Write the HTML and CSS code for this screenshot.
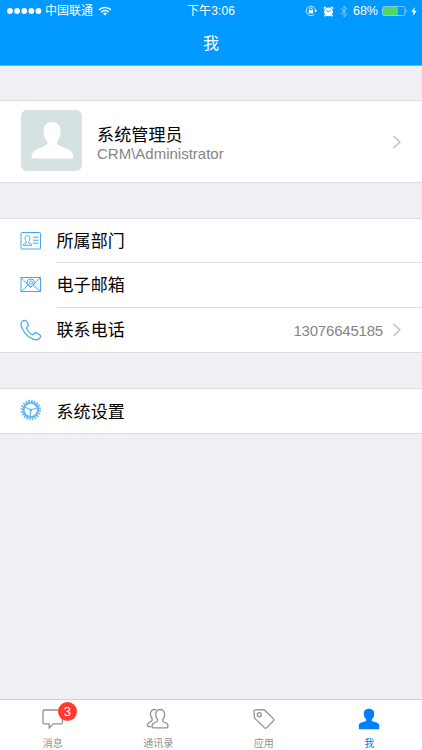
FILE: index.html
```html
<!DOCTYPE html>
<html lang="zh-CN">
<head>
<meta charset="utf-8">
<meta name="viewport" content="width=device-width, initial-scale=1">
<title>我</title>
<link rel="stylesheet" href="styles.css">
</head>
<body>
<div class="app">
  <header class="header">
    <div class="status">
      <div class="status-left">
        <svg class="dots" width="35" height="8" viewBox="0 0 35 8" fill="#fff"><circle cx="3" cy="4" r="2.9"/><circle cx="10.1" cy="4" r="2.9"/><circle cx="17.2" cy="4" r="2.9"/><circle cx="24.3" cy="4" r="2.9"/><circle cx="31.4" cy="4" r="2.9"/></svg>
        <span class="carrier">中国联通</span>
        <svg class="wifi" width="14" height="10" viewBox="0 0 14 10" fill="none" stroke="#fff" stroke-width="1.5"><path d="M1 3.9a8.5 8.5 0 0 1 12 0M3.2 6.1a5.4 5.4 0 0 1 7.6 0"/><path d="M7 9.6L4.9 7.5a3 3 0 0 1 4.2 0z" fill="#fff" stroke="none"/></svg>
      </div>
      <span class="time">下午3:06</span>
      <div class="status-right">
        <svg class="lock" width="12" height="12" viewBox="0 0 12 12" fill="none" stroke="#fff"><path d="M9.3 9.2A4.7 4.7 0 1 1 10.6 5.4" stroke-width=".8"/><path d="M9 5.2h3.2L10.6 7.3z" fill="#fff" stroke="none"/><path d="M4.6 5.5V4.3a1.3 1.3 0 0 1 2.6 0v1.2" stroke-width=".8"/><rect x="3.7" y="5.2" width="4.4" height="3.2" fill="#fff" stroke="none"/></svg>
        <svg class="alarm" width="11" height="11" viewBox="0 0 11 11"><circle cx="5.5" cy="5.8" r="4.4" fill="#fff"/><path d="M.8 2.6L2.8.8M10.2 2.6L8.2.8M2.5 9l-1 1.400M8.5 9l1 1.400" stroke="#fff" stroke-width="1.5"/><path d="M3.4 4.3l2.1 1.8 2-2.2" fill="none" stroke="#0099ff" stroke-width=".9"/></svg>
        <svg class="bluetooth" width="8" height="13" viewBox="0 0 8 13" fill="none" stroke="#7cc9ff" stroke-width="1"><path d="M.7 3.5l6.2 5.8L4 12V1l2.900 2.700L.7 9.5"/></svg>
        <span class="percent">68%</span>
        <svg class="battery" width="26" height="10" viewBox="0 0 26 10"><rect x=".5" y=".5" width="22.5" height="9" rx="1.5" fill="none" stroke="#7cc9ff"/><rect x="1" y="1" width="15" height="8" rx="1" fill="#4cd964"/><path d="M24 3.2q1.4 1.8 0 3.6z" fill="#b5e0ff"/></svg>
        <svg class="bolt" width="6" height="9" viewBox="0 0 6 9"><path d="M3.8 0L.2 5h2.200L1.8 9 5.8 3.700H3.400z" fill="#fff"/></svg>
      </div>
    </div>
    <h1 class="title">我</h1>
  </header>

  <main class="content">
    <section class="group profile">
      <svg class="avatar" width="61" height="61" viewBox="0 0 61 61"><rect width="61" height="61" rx="6" fill="#d6e1e1"/><path d="M31 12c-5.500 0-8.700 3.700-8.500 9.500.1 4.500 1.700 7.500 3.800 9.700v2.800c-1.500 1.900-6 3.400-9.800 5.100-4.300 1.900-6 4.800-6 9.400h42c0-4.600-1.700-7.500-6-9.400-3.800-1.700-8.900-3.200-10.400-5.100v-2.800c2.100-2.200 3.400-5.200 3.500-9.700.2-5.800-3.100-9.500-8.600-9.500z" fill="#fff"/></svg>
      <div class="who">
        <div class="name">系统管理员</div>
        <div class="account">CRM\Administrator</div>
      </div>
      <svg class="chevron" width="10" height="14" viewBox="0 0 10 14"><path d="M1.500 1l6.300 6-6.300 6"/></svg>
    </section>

    <section class="group list">
      <div class="row">
        <svg class="icon" width="22" height="22" viewBox="0 0 22 22"><rect x="1" y="2.500" width="19.500" height="16.500" rx="1"/><path d="M7.500 5.700c-1.800 0-2.500 1.200-2.400 2.900.1 1.600.6 2.300 1.200 3v1.100c-1.300.8-3.100.8-3.100 2.600h8.700c0-1.800-1.900-1.800-3.200-2.600v-1.100c.7-.7 1.100-1.400 1.200-3 .1-1.700-.6-2.900-2.400-2.900zM13 7.200h5.500M13 10.200h5.500M13 13.200h5.500"/></svg>
        <div class="cell"><span class="label">所属部门</span></div>
      </div>
      <div class="row">
        <svg class="icon" width="22" height="22" viewBox="0 0 22 22"><rect x="1" y="3.500" width="19.500" height="14"/><path d="M1 3.500l9.700 10L20.500 3.500M1 17.500l7.200-6.500M20.500 17.500l-7.200-6.500"/><path d="M10.800 12.900C7.700 10.800 7.100 9.500 7.100 8.200a3.700 3.200 0 0 1 7.400 0c0 1.300-.6 2.600-3.700 4.700zM12.300 9.200c-.8 1.300-3 1.200-3-.6 0-2 3-2.200 3-.4 0 1.500.6 1.700 1.300.9"/></svg>
        <div class="cell"><span class="label">电子邮箱</span></div>
      </div>
      <div class="row">
        <svg class="icon phone" width="22" height="22" viewBox="0 0 22 22"><path d="M2.500 2.200C.4 3.700.8 7 2.600 10.300c2.300 4.400 6.200 8.200 10.400 9.800 3.300 1.300 5.800.8 7.200-1.500.7-1.200.4-2.200-.8-3l-2.800-1.700c-1.100-.6-2-.3-2.600.7-.8 1.200-1.700 1.400-2.900.5-1.800-1.300-3.200-2.900-4.200-4.800-.6-1.200-.5-1.900.6-2.700 1-.7 1-1.500.5-2.600L6.600 2.500C5.700 1 4 1 2.500 2.200z"/></svg>
        <div class="cell"><span class="label">联系电话</span><span class="value">13076645185</span></div>
        <svg class="chevron" width="10" height="14" viewBox="0 0 10 14"><path d="M1.500 1l6.300 6-6.300 6"/></svg>
      </div>
    </section>

    <section class="group list">
      <div class="row">
        <svg class="icon gear" width="22" height="22" viewBox="0 0 22 22"><circle cx="10.800" cy="11" r="9.300" stroke-width="1.800" stroke-dasharray="1.650 1.272"/><circle cx="10.800" cy="11" r="7.300" stroke-width="2.300"/><circle cx="10.800" cy="11" r="1.500" fill="#62b8f5" stroke="none"/><path d="M10.800 11L5 8M10.800 11l6-2M10.800 11l-.7 6.300" stroke-width="1.300"/></svg>
        <div class="cell"><span class="label">系统设置</span></div>
      </div>
    </section>
  </main>

  <nav class="tabs">
    <div class="tab">
      <div class="tab-icon">
        <svg width="24" height="24" viewBox="0 0 24 24"><path d="M3.200 3h17.100q1.200 0 1.200 1.200v11.400q0 1.200-1.200 1.200h-7.800L8.200 21v-4.200h-5Q2 16.800 2 15.600V4.200Q2 3 3.200 3z"/></svg>
        <span class="badge">3</span>
      </div>
      <span class="tab-label">消息</span>
    </div>
    <div class="tab">
      <div class="tab-icon">
        <svg width="24" height="24" viewBox="0 0 24 24"><path d="M14.200 2.500c-3.200 0-4.700 2.400-4.500 5.300.1 2.500.9 3.700 1.900 4.700v1.600c0 1.200-5.400 1.300-5.400 4.100v1.400q0 1.200 1.200 1.200h13.300q1.200 0 1.200-1.200v-1.400c0-2.800-5.200-2.900-5.200-4.100v-1.600c1-1 1.900-2.200 2-4.700.2-2.900-1.400-5.300-4.500-5.300z"/><path d="M10.200 2.800C6.600 1.700 4.200 4 4.400 7.300c.1 2.400.9 3.500 1.800 4.500v1.500C6.200 14.500 1.500 15 1.500 17.800v.8q0 1 1 1h3.200"/></svg>
      </div>
      <span class="tab-label">通讯录</span>
    </div>
    <div class="tab">
      <div class="tab-icon">
        <svg width="24" height="24" viewBox="0 0 24 24"><path d="M3 2.800l8.400-.2q.8 0 1.400.6l8.700 8.700q.9.900 0 1.800l-7 7.200q-.9.900-1.800 0L3.100 11.600q-.6-.6-.6-1.400L2 3.800q0-1 1-1z"/><circle cx="7.300" cy="7.700" r="2"/></svg>
      </div>
      <span class="tab-label">应用</span>
    </div>
    <div class="tab active">
      <div class="tab-icon">
        <svg width="24" height="24" viewBox="0 0 24 24"><path d="M12 1.800c-3.700 0-5.400 2.300-5.200 5.300.1 2.500 1 4.100 2.300 5.200v1.500c0 1.300-7.300 1-7.300 4.200v3.200q0 1 1 1h18.400q1 0 1-1v-3.200c0-3.200-7.300-2.900-7.300-4.200v-1.500c1.300-1.100 2.200-2.700 2.300-5.200.2-3-1.500-5.300-5.200-5.300z"/></svg>
      </div>
      <span class="tab-label">我</span>
    </div>
  </nav>
</div>
</body>
</html>
```
FILE: styles.css
```css
* { box-sizing: border-box; }

body {
  margin: 0;
  font-family: "Liberation Sans", "Noto Sans CJK SC", sans-serif;
  color: #000;
}

svg { display: block; flex: none; }

.app {
  display: flex;
  flex-direction: column;
  width: 422px;
  height: 750px;
  overflow: hidden;
  background: #efeff4;
}

.header {
  flex: none;
  height: 66px;
  background: #0099ff;
  border-bottom: 1px solid #6fb9ec;
  color: #fff;
}

.status {
  display: grid;
  grid-template-columns: 1fr auto 1fr;
  height: 22px;
  padding: 0 5px 0 7px;
  font-size: 12px;
  line-height: 22px;
}

.status-left, .status-right { display: flex; align-items: center; }
.status-right { justify-content: flex-end; }
.carrier { margin-left: 3px; }
.wifi { margin-left: 5px; }
.time { letter-spacing: .1px; margin-right: 2px; }
.alarm { margin-left: 6px; }
.bluetooth { margin-left: 6px; }
.percent { margin-left: 5px; font-size: 12.500px; }
.battery { margin-left: 4px; }
.bolt { margin-left: 3px; }

.title {
  margin: 0;
  text-align: center;
  font-size: 16px;
  font-weight: 400;
  line-height: 43px;
}

.content {
  flex: 1;
  display: flex;
  flex-direction: column;
  gap: 35px;
  padding-top: 34px;
}

.group {
  background: #fff;
  border-top: 1px solid #dddde0;
  border-bottom: 1px solid #dddde0;
}

.profile {
  display: flex;
  align-items: center;
  height: 83px;
  padding: 0 20px 0 21px;
}

.avatar { margin-top: -2px; }
.who { flex: 1; margin: 1px 0 0 15px; }

.name, .label {
  font-size: 17px;
  font-weight: 400;
  line-height: 21px;
}

.name { padding-top: 2px; letter-spacing: .15px; }
.label { padding-top: 2px; letter-spacing: .1px; }

.account {
  color: #858585;
  font-size: 15px;
  line-height: 15px;
}

.chevron {
  fill: none;
  stroke: #c3c3c8;
  stroke-width: 1.700;
}

.row {
  display: flex;
  align-items: center;
  height: 44.500px;
  padding-left: 20px;
}

.icon {
  fill: none;
  stroke: #42a9ef;
  stroke-width: 1;
}

.phone { stroke-width: 1.200; }
.gear { margin-top: -2px; stroke: #62b8f5; }

.cell {
  flex: 1;
  align-self: stretch;
  display: flex;
  align-items: center;
  justify-content: space-between;
  margin-left: 14.500px;
  border-bottom: 1px solid #dddde0;
}

.row:first-child { height: 44px; }
.row:last-child .cell { border-bottom: 0; }
.row:last-child { height: 44px; }
.row:nth-child(3) { height: 44.500px; }
.row .chevron { margin: 0 20px 0 9px; }

.value {
  padding-top: 2px;
  color: #858585;
  font-size: 15px;
  letter-spacing: -.2px;
}

.tabs {
  flex: none;
  display: grid;
  grid-template-columns: repeat(4, 1fr);
  height: 51px;
  background: #fff;
  border-top: 1px solid #cfcfd4;
}

.tab {
  display: flex;
  flex-direction: column;
  align-items: center;
  padding-top: 7px;
  color: #929292;
}

.tab-icon { position: relative; }
.tab svg { fill: none; stroke: currentColor; stroke-width: 1.300; }
.tab-label { font-size: 10px; line-height: 14px; margin-top: 6px; }
.tab.active { color: #0080f0; }
.tab.active svg { fill: #0080ff; stroke: none; }

.badge {
  position: absolute;
  top: -5px;
  left: 17px;
  width: 19px;
  height: 19px;
  border-radius: 50%;
  background: #ff3b30;
  color: #fff;
  font-size: 13px;
  line-height: 19px;
  text-align: center;
}
```
